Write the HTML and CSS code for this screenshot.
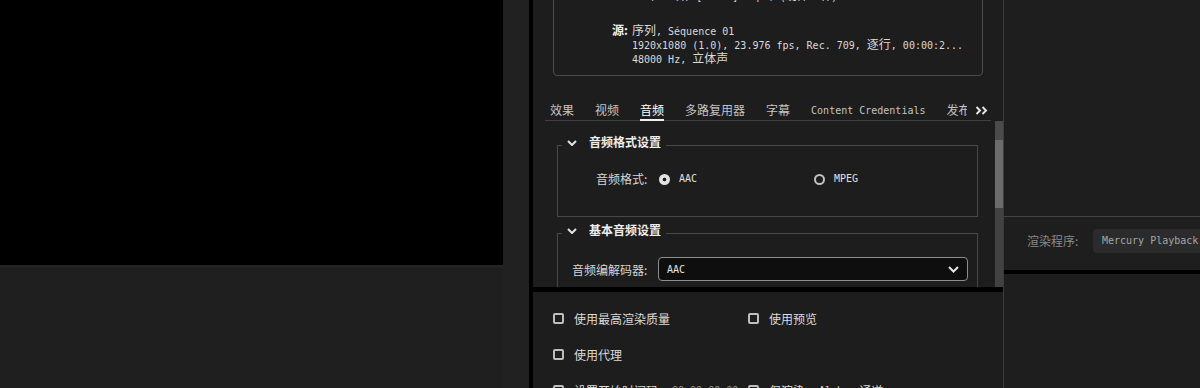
FILE: index.html
```html
<!DOCTYPE html>
<html lang="zh-CN">
    <head>
        <meta charset="utf-8" />
        <title>导出设置</title>
        <link rel="stylesheet" href="styles.css">
    </head>

    <body>
        <div class="screen">
            <div class="monitor">
                <div class="video"></div>
                <div class="monitor-foot"></div>
            </div>
            <div class="gutter"></div>

            <div class="dialog">
                <!-- 摘要 -->
                <div class="summary">
                    <div class="sum-group">
                        <div class="sum-row">
                            <span class="sum-label"></span>
                            <span class="sum-text"><span class="mono">VBR, 1 次, [10.00] Mbps, </span>(硬件工作)</span>
                        </div>
                    </div>
                    <div class="sum-group source">
                        <div class="sum-row">
                            <span class="sum-label">源:</span>
                            <span class="sum-text">序列<span class="mono">, Séquence 01</span></span>
                        </div>
                        <div class="sum-row">
                            <span class="sum-label"></span>
                            <span class="sum-text"><span class="mono">1920x1080 (1.0), 23.976 fps, Rec. 709, </span>逐行<span class="mono">, 00:00:2...</span></span>
                        </div>
                        <div class="sum-row">
                            <span class="sum-label"></span>
                            <span class="sum-text"><span class="mono">48000 Hz, </span>立体声</span>
                        </div>
                    </div>
                </div>

                <!-- 选项卡 -->
                <div class="tabs">
                    <div class="tab">效果</div>
                    <div class="tab">视频</div>
                    <div class="tab active">音频</div>
                    <div class="tab">多路复用器</div>
                    <div class="tab">字幕</div>
                    <div class="tab mono">Content Credentials</div>
                    <div class="tab cut">发布</div>
                    <div class="tab-more">
                        <svg width="13" height="9" viewBox="0 0 13 9"><polyline points="1.5,1 5,4.5 1.5,8" /><polyline points="7.5,1 11,4.5 7.5,8" /></svg>
                    </div>
                </div>

                <div class="panel">
                    <div class="panel-body">
                        <fieldset class="group">
                            <legend>
                                <svg class="chevron" width="10" height="6" viewBox="0 0 10 6"><polyline points="1,1 5,5 9,1" /></svg><span>音频格式设置</span>
                            </legend>
                            <div class="format-row">
                                <span>音频格式:</span>
                                <label class="option"><span class="radio on"></span><span class="mono">AAC</span></label>
                                <label class="option"><span class="radio"></span><span class="mono">MPEG</span></label>
                            </div>
                        </fieldset>
                        <fieldset class="group">
                            <legend>
                                <svg class="chevron" width="10" height="6" viewBox="0 0 10 6"><polyline points="1,1 5,5 9,1" /></svg><span>基本音频设置</span>
                            </legend>
                            <div class="codec-row">
                                <span class="codec-label">音频编解码器:</span>
                                <div class="select">
                                    <span class="mono">AAC</span>
                                    <svg class="chevron" width="11" height="7" viewBox="0 0 11 7"><polyline points="1,1 5.5,5.5 10,1" /></svg>
                                </div>
                            </div>
                        </fieldset>
                    </div>
                    <div class="scrollbar">
                        <div class="sb-top"></div>
                        <div class="sb-thumb"></div>
                    </div>
                </div>

                <!-- 渲染选项 -->
                <div class="dialog-foot">
                    <label class="check"><span class="box"></span>使用最高渲染质量</label>
                    <label class="check"><span class="box"></span>使用预览</label>
                    <label class="check"><span class="box"></span>使用代理</label>
                    <span></span>
                    <label class="check"><span class="box"></span>设置开始时间码<span class="mono dim">00:00:00:00</span></label>
                    <label class="check"><span class="box"></span>仅渲染<span class="mono">Alpha</span>通道</label>
                </div>
            </div>

            <div class="side">
                <div class="side-top"></div>
                <div class="render-row">
                    <span class="render-label">渲染程序:</span>
                    <div class="render-select mono">Mercury Playback Engine</div>
                </div>
                <div class="side-rest"></div>
            </div>
        </div>
    </body>
</html>
```

FILE: styles.css
```css
body {
    margin: 0;
    background: #1f1f1f;
    color: #d6d6d6;
    font-family: "Noto Sans CJK SC", sans-serif;
    font-size: 12px;
    overflow: hidden;
}
.mono {
    font-family: "DejaVu Sans Mono", "Liberation Mono", monospace;
    font-size: 10px;
}
.screen {
    display: flex;
    width: 1200px;
    height: 388px;
    overflow: hidden;
}

/* 节目监视器 */
.monitor {
    width: 503px;
    flex: none;
    display: flex;
    flex-direction: column;
}
.video {
    height: 265px;
    background: #000;
}
.monitor-foot {
    flex: 1;
    border-top: 2px solid #252525;
}
.gutter {
    width: 26px;
    flex: none;
    background: #212121;
}

/* 对话框 */
.dialog {
    width: 470px;
    flex: none;
    border-left: 4px solid #000;
    background: #1d1d1d;
    display: flex;
    flex-direction: column;
}
.summary {
    margin: -24px 20px 0;
    padding: 11px 0 10px;
    border: 1px solid #4b4b4b;
    border-radius: 4px;
}
.sum-group.source {
    margin-top: 21px;
}
.sum-row {
    display: flex;
    height: 14px;
    line-height: 14px;
    white-space: nowrap;
}
.sum-label {
    width: 74px;
    flex: none;
    padding-right: 3px;
    text-align: right;
    font-weight: bold;
    color: #f2f2f2;
}
.sum-text {
    padding-left: 1px;
    color: #dadada;
}

.tabs {
    display: flex;
    align-items: flex-start;
    gap: 21px;
    height: 24px;
    margin: 20px 12px 0;
    padding-left: 5px;
    border-bottom: 1px solid #3f3f3f;
}
.tab {
    flex: none;
    box-sizing: border-box;
    height: 25px;
    margin-bottom: -1px;
    padding-top: 5px;
    line-height: 18px;
    color: #c4c4c4;
    white-space: nowrap;
}
.tab.mono {
    padding-top: 6px;
}
.tab.active {
    color: #fff;
    border-bottom: 2px solid #f0f0f0;
}
.tab.cut {
    width: 21px;
    overflow: hidden;
}
.tab-more {
    margin: 10px 0 0 -13px;
    height: 9px;
}
.tab-more svg,
.chevron {
    display: block;
    fill: none;
    stroke: #e4e4e4;
    stroke-width: 2;
}

.panel {
    display: flex;
    height: 166px;
}
.panel-body {
    flex: 1;
    overflow: hidden;
    padding: 13px 17px 0 24px;
}
.group {
    margin: 0;
    padding: 0 0 40px;
    border: 1px solid #484848;
    min-width: 0;
}
.group:first-child {
    padding-bottom: 0;
}
.group + .group {
    margin-top: 5px;
}
.group legend {
    margin-left: 4px;
    padding: 0 5px 6px;
    line-height: 16px;
    font-weight: bold;
    color: #ededed;
}
.group legend .chevron {
    display: inline-block;
    margin-right: 12px;
    vertical-align: 1px;
}
.format-row {
    display: grid;
    grid-template-columns: 63px 155px auto;
    align-items: center;
    padding: 15px 0 29px 38px;
    line-height: 16px;
}
.option {
    display: flex;
    align-items: center;
    gap: 9px;
    color: #e0e0e0;
}
.radio {
    width: 11px;
    height: 11px;
    box-sizing: border-box;
    border: 2px solid #c2c2c2;
    border-radius: 50%;
}
.radio.on {
    border-color: #e2e2e2;
    background: radial-gradient(circle, #1d1d1d 0 1.5px, #e2e2e2 2.2px);
}
.codec-row {
    display: flex;
    align-items: center;
    padding: 13px 9px 0 14px;
}
.codec-label {
    width: 86px;
    flex: none;
}
.select {
    flex: 1;
    height: 24px;
    box-sizing: border-box;
    display: flex;
    align-items: center;
    justify-content: space-between;
    padding: 0 8px;
    border: 1px solid #8e8e8e;
    border-radius: 4px;
    background: #0e0e0e;
    color: #e4e4e4;
}
.scrollbar {
    width: 8px;
    flex: none;
    background: #424242;
}
.sb-top {
    height: 19px;
    background: #4b4b4b;
}
.sb-thumb {
    height: 68px;
    background: #6b6b6b;
}

.dialog-foot {
    flex: 1;
    border-top: 5px solid #000;
    display: grid;
    grid-template-columns: 195px auto;
    grid-auto-rows: 36px;
    align-items: center;
    align-content: start;
    padding: 8px 0 0 20px;
}
.check {
    display: flex;
    align-items: center;
    gap: 10px;
    color: #dcdcdc;
    white-space: nowrap;
}
.check .mono {
    margin-left: 4px;
}
.check .dim {
    color: #9a9a9a;
}
.box {
    width: 11px;
    height: 11px;
    box-sizing: border-box;
    border: 2px solid #bdbdbd;
    border-radius: 2px;
}

/* 右侧面板 */
.side {
    flex: 1;
    min-width: 0;
    border-left: 1px solid #3d3d3d;
    background: #1e1e1e;
    display: flex;
    flex-direction: column;
}
.side-top {
    height: 216px;
    border-bottom: 1px solid #444;
}
.render-row {
    display: flex;
    align-items: flex-start;
    height: 41px;
    padding: 12px 0 0 23px;
    border-bottom: 4px solid #000;
}
.render-label {
    width: 66px;
    flex: none;
    line-height: 24px;
    color: #8a8a8a;
}
.render-select {
    flex: none;
    width: 160px;
    height: 24px;
    line-height: 24px;
    padding-left: 9px;
    border-radius: 4px;
    background: #2b2b2b;
    color: #a6a6a6;
    white-space: nowrap;
}
.side-rest {
    flex: 1;
}
```
